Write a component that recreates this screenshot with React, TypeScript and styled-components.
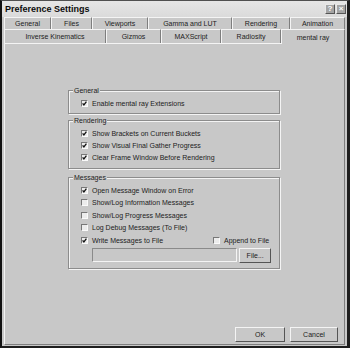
import React from "react";
import styled, { createGlobalStyle } from "styled-components";

const Global = createGlobalStyle`
  html, body { margin: 0; padding: 0; background: #c8c8c8; }
  * { box-sizing: border-box; }
`;

const BG = "#c8c8c8";
const LIGHT = "#f4f4f4";
const DARK = "#7e7e7e";

const Window = styled.div`
  width: 350px;
  height: 348px;
  display: flex;
  flex-direction: column;
  background: ${BG};
  border-left: 2px solid #121212;
  border-right: 3px solid #1e1e1e;
  border-bottom: 2px solid #1e1e1e;
  border-top: 1px solid #505050;
  font-family: "Liberation Sans", Arial, sans-serif;
  font-size: 7px;
  color: #1c1c1c;
`;

const TitleBar = styled.div`
  height: 16px;
  display: flex;
  align-items: center;
  justify-content: space-between;
  padding: 0 1px 0 3px;
  background: linear-gradient(#e6e6e6, #dadada);
`;

const Title = styled.div`
  font-weight: bold;
  font-size: 9px;
  color: #0c0c0c;
`;

const TitleButtons = styled.div`
  display: flex;
  gap: 1px;
`;

const TitleButton = styled.div`
  width: 10px;
  height: 10px;
  display: flex;
  align-items: center;
  justify-content: center;
  background: #a4a4a4;
  border-top: 1px solid #e8e8e8;
  border-left: 1px solid #e8e8e8;
  border-right: 1px solid #555;
  border-bottom: 1px solid #555;
  color: #fff;
  font-weight: bold;
  font-size: 8px;
  line-height: 1;
`;

const TabRow = styled.div<{ $h: number }>`
  height: ${(p) => p.$h}px;
  display: flex;
  padding-left: 2px;
  position: relative;
  z-index: 1;
`;

const Tab = styled.div<{ $w: number; $active?: boolean }>`
  width: ${(p) => p.$w}px;
  flex: none;
  display: flex;
  align-items: center;
  justify-content: center;
  border-top: 1px solid ${LIGHT};
  border-left: 1px solid ${LIGHT};
  border-right: 1px solid ${DARK};
  background: ${BG};
  white-space: nowrap;
  ${(p) => (p.$active ? `height: calc(100% + 1px); padding-top: 1px;` : "")}
`;

const Panel = styled.div`
  flex: 1;
  margin: 0 2px 1px 2px;
  display: flex;
  flex-direction: column;
  border-top: 1px solid ${LIGHT};
  border-left: 1px solid ${LIGHT};
  border-right: 1px solid ${DARK};
  border-bottom: 1px solid ${DARK};
  padding: 46px 0 1px 63px;
`;

const Group = styled.div<{ $top: number; $pt: number; $pb: number }>`
  position: relative;
  width: 212px;
  margin-top: ${(p) => p.$top}px;
  padding: ${(p) => p.$pt}px 8px ${(p) => p.$pb}px 12px;
  border: 1px solid #8c8c8c;
  box-shadow: inset 1px 1px 0 ${LIGHT}, 1px 1px 0 ${LIGHT};
`;

const Legend = styled.span`
  position: absolute;
  top: -5px;
  left: 4px;
  padding: 0 1px;
  background: ${BG};
  line-height: 9px;
`;

const Row = styled.div<{ $h?: number }>`
  height: ${(p) => p.$h ?? 12}px;
  display: flex;
  align-items: center;
  gap: 4px;
  white-space: nowrap;
`;

const WriteRow = styled.div`
  height: 12.5px;
  display: grid;
  grid-template-columns: 132px auto;
  align-items: center;
`;

const Box = styled.span`
  width: 7px;
  height: 7px;
  flex: none;
  display: inline-flex;
  background: #ececec;
  border-top: 1px solid #777;
  border-left: 1px solid #777;
  border-right: 1px solid #fafafa;
  border-bottom: 1px solid #fafafa;
`;

const FieldRow = styled.div`
  display: flex;
  align-items: center;
  gap: 2px;
  margin: 1px 0 0 11px;
`;

const Field = styled.div`
  width: 147px;
  height: 14px;
  border-top: 1px solid #8a8a8a;
  border-left: 1px solid #8a8a8a;
  border-right: 1px solid ${LIGHT};
  border-bottom: 1px solid ${LIGHT};
  background: ${BG};
`;

const Button = styled.div<{ $w: number }>`
  width: ${(p) => p.$w}px;
  height: 15px;
  display: flex;
  align-items: center;
  justify-content: center;
  border-top: 1px solid ${LIGHT};
  border-left: 1px solid ${LIGHT};
  border-right: 1px solid #555;
  border-bottom: 1px solid #555;
  background: ${BG};
`;

const Footer = styled.div`
  margin-top: auto;
  display: flex;
  justify-content: flex-end;
  gap: 5px;
  padding: 0 6px 1px 0;
`;

function Check({ checked }: { checked?: boolean }) {
  return (
    <Box>
      {checked && (
        <svg width="5" height="5" viewBox="0 0 5 5">
          <path d="M0.6 2.4 L1.9 3.9 L4.4 0.7" fill="none" stroke="#111" strokeWidth="1.3" />
        </svg>
      )}
    </Box>
  );
}

function CheckRow({ label, checked, h }: { label: string; checked?: boolean; h?: number }) {
  return (
    <Row $h={h}>
      <Check checked={checked} />
      <span>{label}</span>
    </Row>
  );
}

const row1: [string, number][] = [
  ["General", 47],
  ["Files", 41],
  ["Viewports", 56],
  ["Gamma and LUT", 84],
  ["Rendering", 58],
  ["Animation", 55],
];
const row2: [string, number][] = [
  ["Inverse Kinematics", 102],
  ["Gizmos", 55],
  ["MAXScript", 60],
  ["Radiosity", 60],
  ["mental ray", 64],
];

export default function App() {
  return (
    <>
      <Global />
      <Window>
        <TitleBar>
          <Title>Preference Settings</Title>
          <TitleButtons>
            <TitleButton>?</TitleButton>
            <TitleButton>×</TitleButton>
          </TitleButtons>
        </TitleBar>
        <TabRow $h={12}>
          {row1.map(([t, w]) => (
            <Tab key={t} $w={w}>{t}</Tab>
          ))}
        </TabRow>
        <TabRow $h={14}>
          {row2.map(([t, w]) => (
            <Tab key={t} $w={w} $active={t === "mental ray"}>{t}</Tab>
          ))}
        </TabRow>
        <Panel>
          <Group $top={0} $pt={6} $pb={4}>
            <Legend>General</Legend>
            <CheckRow label="Enable mental ray Extensions" checked />
          </Group>
          <Group $top={6} $pt={6} $pb={5}>
            <Legend>Rendering</Legend>
            <CheckRow label="Show Brackets on Current Buckets" checked />
            <CheckRow label="Show Visual Final Gather Progress" checked />
            <CheckRow label="Clear Frame Window Before Rendering" checked />
          </Group>
          <Group $top={8} $pt={6} $pb={5}>
            <Legend>Messages</Legend>
            <CheckRow h={12.5} label="Open Message Window on Error" checked />
            <CheckRow h={12.5} label="Show/Log Information Messages" />
            <CheckRow h={12.5} label="Show/Log Progress Messages" />
            <CheckRow h={12.5} label="Log Debug Messages (To File)" />
            <WriteRow>
              <CheckRow label="Write Messages to File" checked />
              <CheckRow label="Append to File" />
            </WriteRow>
            <FieldRow>
              <Field />
              <Button $w={32}>File...</Button>
            </FieldRow>
          </Group>
          <Footer>
            <Button $w={50}>OK</Button>
            <Button $w={48}>Cancel</Button>
          </Footer>
        </Panel>
      </Window>
    </>
  );
}
